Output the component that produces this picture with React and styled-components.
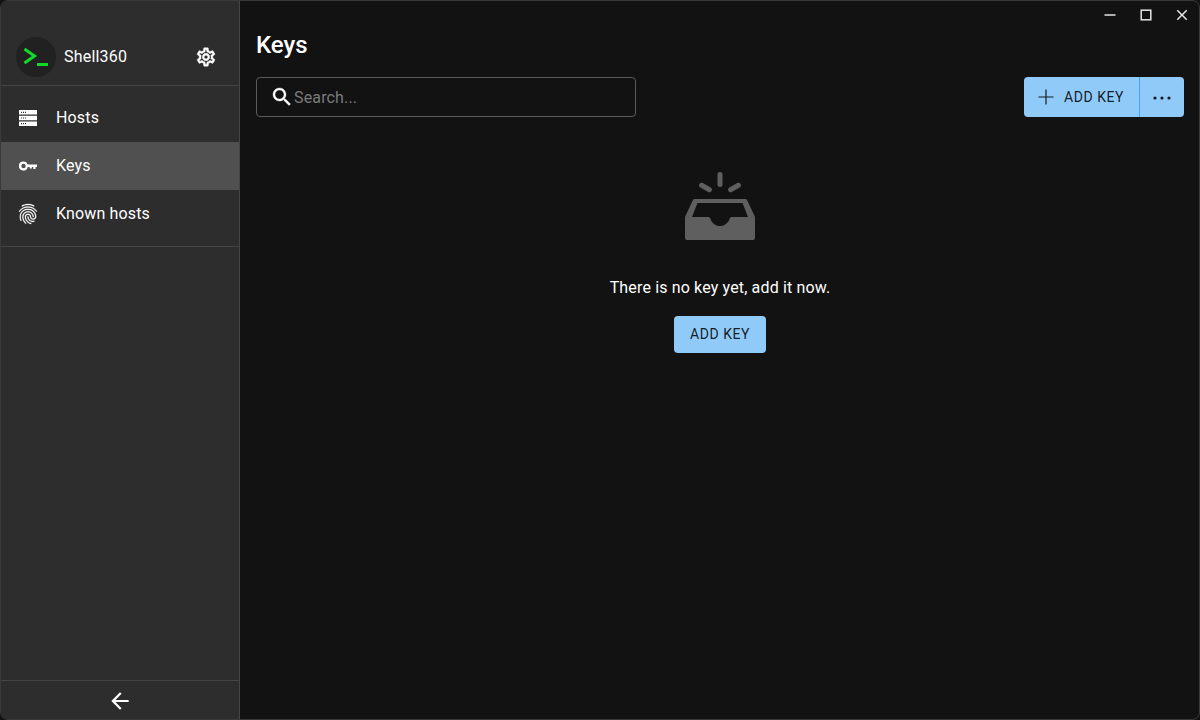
import React from "react";
import styled, { createGlobalStyle } from "styled-components";
import { MdArrowBack, MdClose } from "react-icons/md";

const Global = createGlobalStyle`
  html, body { margin: 0; padding: 0; background: #121212; }
  * { box-sizing: border-box; }
  body { font-family: Roboto, "Liberation Sans", sans-serif; color: #fff; overflow: hidden; }
`;

const Win = styled.div`
  width: 1200px; height: 720px; display: flex; overflow: hidden;
  background: #121212; border: 1px solid #3a3a3a; border-radius: 8px;
`;
const Sidebar = styled.aside`
  width: 239px; flex: none; display: flex; flex-direction: column;
  background: #2d2d2d; border-right: 1px solid #444;
`;
const Brand = styled.div`
  height: 85px; flex: none; display: flex; align-items: center; padding: 28px 22px 0 15px;
  border-bottom: 1px solid #444;
`;
const Avatar = styled.div`
  width: 40px; height: 40px; border-radius: 50%; background: #212121; flex: none;
  display: flex; align-items: center; justify-content: center;
`;
const BrandName = styled.span`
  font-size: 16px; margin-left: 8px; flex: 1; line-height: 24px; letter-spacing: .2px;
`;
const GearBtn = styled.span`display: flex; color: #fff;`;
const Nav = styled.nav`
  padding: 8px 0; border-bottom: 1px solid #444; flex: none;
`;
const NavItem = styled.div`
  height: 48px; display: flex; align-items: center; padding-left: 15px;
  font-size: 16px; font-weight: 400; letter-spacing: .15px;
  background: ${p => (p.$active ? "#505050" : "transparent")};
`;
const NavLabel = styled.span`margin-top: -2px;`;
const NavIcon = styled.span`
  width: 24px; height: 24px; margin-right: 16px; display: flex; align-items: center; justify-content: center; color: #fff;
`;
const Spacer = styled.div`flex: 1;`;
const Collapse = styled.div`
  height: 39px; flex: none; border-top: 1px solid #444; padding-top: 2px;
  display: flex; align-items: center; justify-content: center;
`;
const Main = styled.main`
  flex: 1; min-width: 0; display: flex; flex-direction: column; padding: 0 15px 0 16px;
`;
const TitleBar = styled.div`
  height: 29px; flex: none; display: flex; justify-content: flex-end; margin-right: -16px;
`;
const WinBtn = styled.span`
  width: 36px; height: 27px; display: flex; align-items: center; justify-content: center; color: #e6e6e6;
`;
const Title = styled.h1`
  margin: 0; font-size: 24px; font-weight: 500; line-height: 30px;
`;
const Toolbar = styled.div`
  margin-top: 17px; display: flex; justify-content: space-between; align-items: center;
`;
const Search = styled.div`
  width: 380px; height: 40px; display: flex; align-items: center; padding-left: 13px;
  border: 1px solid #5a5a5a; border-radius: 4px;
`;
const SearchInput = styled.input`
  flex: 1; min-width: 0; border: 0; outline: 0; background: transparent; color: #fff; padding: 0;
  font: 400 16px Roboto, sans-serif; letter-spacing: .15px;
  &::placeholder { color: #7b7b7b; opacity: 1; }
`;
const Group = styled.div`
  display: flex; height: 40px; border-radius: 4px; overflow: hidden; background: #90caf9; color: rgba(0,0,0,.87);
`;
const GroupMain = styled.div`
  width: 116px; display: flex; align-items: center; padding: 0 0 1px 14px; gap: 10px;
  border-right: 1px solid #42a5f5; font-size: 14px; font-weight: 400; letter-spacing: .55px;
`;
const GroupMore = styled.div`
  width: 44px; display: flex; align-items: center; justify-content: center; padding-top: 1px;
`;
const Empty = styled.div`
  display: flex; flex-direction: column; align-items: center; margin-top: 55px;
`;
const EmptyText = styled.p`
  margin: 36px 0 0; font-size: 16px; line-height: 24px; letter-spacing: .15px;
`;
const Cta = styled.button`
  margin-top: 16px; width: 92px; height: 37px; border: 0; border-radius: 4px; padding: 0 0 2px;
  background: #90caf9; color: rgba(0,0,0,.87); font: 400 14px Roboto, sans-serif; letter-spacing: .55px;
`;

const TerminalLogo = () => (
  <svg width="26" height="20" viewBox="0 0 26 20" fill="none" stroke="#0fdc28">
    <path d="M1.500 2 11.500 9 1.500 16" strokeWidth="3" />
    <path d="M14 17.500h11" strokeWidth="3" />
  </svg>
);
const ServerIcon = () => (
  <svg width="18" height="16" viewBox="0 0 18 16">
    <path fill="#fff" fillRule="evenodd" d="M0 0h18v4.500H0zM0 5.700h18v4.500H0zM0 11.400h18v4.600H0zM2 1.700v1.200h1V1.700zm2 0v1.200h1V1.700zm2 0v1.200h1V1.700zM2 7.400v1.200h1V7.400zm2 0v1.200h1V7.400zm2 0v1.200h1V7.400zM2 13.100v1.200h1v-1.200zm2 0v1.200h1v-1.200zm2 0v1.200h1v-1.200z" />
  </svg>
);
const KeyIcon = () => (
  <svg width="18" height="10" viewBox="0 0 18 10">
    <path fill="#fff" fillRule="evenodd" d="M4.500.5a4.500 4.500 0 0 1 4.200 3H18v2.400h-1.500V8h-2.200V5.900h-1.400V7.500h-2.200V5.900H8.700a4.500 4.500 0 1 1-4.200-5.400zm0 2.300a2.200 2.200 0 1 0 0 4.400 2.200 2.200 0 0 0 0-4.400z" />
  </svg>
);
const GearIcon = () => (
  <svg width="22" height="22" viewBox="0 0 24 24" fill="currentColor" stroke="currentColor" strokeWidth=".5">
    <path d="M19.430 12.980c.04-.32.07-.64.07-.98 0-.34-.03-.66-.07-.98l2.110-1.650c.19-.15.24-.42.12-.64l-2-3.460c-.09-.16-.26-.25-.44-.25-.06 0-.12.01-.17.03l-2.490 1c-.52-.4-1.080-.73-1.690-.98l-.38-2.650C14.460 2.180 14.250 2 14 2h-4c-.25 0-.46.18-.49.42l-.38 2.650c-.61.25-1.170.59-1.690.98l-2.490-1c-.06-.02-.12-.03-.18-.03-.17 0-.34.09-.43.25l-2 3.460c-.13.22-.07.49.12.64l2.110 1.650c-.04.32-.07.65-.07.98 0 .33.03.66.07.98l-2.110 1.650c-.19.15-.24.42-.12.64l2 3.460c.09.16.26.25.44.25.06 0 .12-.01.17-.03l2.490-1c.52.4 1.080.73 1.690.98l.38 2.650c.03.24.24.42.49.42h4c.25 0 .46-.18.49-.42l.38-2.650c.61-.25 1.170-.59 1.690-.98l2.490 1c.06.02.12.03.18.03.17 0 .34-.09.43-.25l2-3.460c.12-.22.07-.49-.12-.64l-2.110-1.650zm-1.980-1.710c.04.31.05.52.05.73 0 .21-.02.43-.05.73l-.14 1.130.89.7 1.080.84-.7 1.210-1.270-.51-1.040-.42-.9.68c-.43.32-.84.56-1.250.73l-1.060.43-.16 1.130-.2 1.350h-1.400l-.19-1.350-.16-1.130-1.060-.43c-.43-.18-.83-.41-1.230-.71l-.91-.7-1.060.43-1.270.51-.7-1.210 1.080-.84.89-.7-.14-1.130c-.03-.31-.05-.54-.05-.74s.02-.43.05-.73l.14-1.130-.89-.7-1.080-.84.7-1.210 1.270.51 1.040.42.9-.68c.43-.32.84-.56 1.250-.73l1.060-.43.16-1.130.2-1.350h1.390l.19 1.350.16 1.130 1.060.43c.43.18.83.41 1.230.71l.91.7 1.060-.43 1.270-.51.7 1.210-1.070.85-.89.7.14 1.130zM12 8c-2.210 0-4 1.790-4 4s1.790 4 4 4 4-1.790 4-4-1.790-4-4-4zm0 6c-1.100 0-2-.9-2-2s.9-2 2-2 2 .9 2 2-.9 2-2 2z" />
  </svg>
);
const FingerprintIcon = () => (
  <svg width="26" height="26" viewBox="0 0 24 24" fill="currentColor" stroke="currentColor" strokeWidth=".25">
    <path d="M17.810 4.470c-.08 0-.16-.02-.23-.06C15.660 3.420 14 3 12.010 3c-1.980 0-3.860.47-5.570 1.410-.24.13-.54.04-.68-.2-.13-.24-.04-.55.2-.68C7.820 2.520 9.860 2 12.010 2c2.130 0 3.990.47 6.030 1.520.25.13.34.43.21.67-.09.18-.26.28-.44.28zM3.500 9.720c-.1 0-.2-.03-.29-.09-.23-.16-.28-.47-.12-.7.99-1.400 2.250-2.500 3.750-3.270C9.980 4.040 14 4.030 17.150 5.650c1.500.77 2.760 1.860 3.750 3.250.16.22.11.54-.12.7-.23.16-.54.11-.7-.12-.9-1.260-2.040-2.250-3.390-2.940-2.870-1.470-6.540-1.470-9.400.01-1.360.7-2.500 1.700-3.400 2.960-.08.14-.23.21-.39.21zm6.250 12.070c-.13 0-.26-.05-.35-.15-.87-.87-1.340-1.430-2.010-2.640-.69-1.230-1.050-2.730-1.050-4.340 0-2.970 2.540-5.390 5.660-5.390s5.660 2.420 5.660 5.390c0 .28-.22.5-.5.500s-.5-.22-.5-.5c0-2.420-2.090-4.390-4.660-4.390-2.570 0-4.660 1.970-4.660 4.390 0 1.440.32 2.770.93 3.850.64 1.150 1.080 1.640 1.850 2.420.19.2.19.51 0 .71-.11.1-.24.15-.37.15zm7.170-1.850c-1.190 0-2.240-.3-3.100-.89-1.490-1.010-2.380-2.650-2.380-4.390 0-.28.22-.5.5-.5s.5.22.5.5c0 1.410.72 2.740 1.940 3.560.71.48 1.540.71 2.540.71.24 0 .64-.03 1.040-.1.27-.05.53.13.58.41.05.27-.13.53-.41.58-.57.11-1.070.12-1.210.12zM14.910 22c-.04 0-.09-.01-.13-.02-1.590-.44-2.630-1.030-3.720-2.100-1.400-1.390-2.170-3.240-2.170-5.220 0-1.620 1.380-2.940 3.080-2.940 1.700 0 3.080 1.320 3.080 2.940 0 1.070.93 1.940 2.080 1.940s2.080-.87 2.080-1.940c0-3.770-3.250-6.830-7.250-6.830-2.840 0-5.440 1.580-6.610 4.030-.39.81-.59 1.760-.59 2.800 0 .78.07 2.010.67 3.610.1.26-.03.55-.29.64-.26.1-.55-.04-.64-.29-.49-1.310-.73-2.610-.73-3.960 0-1.200.23-2.290.68-3.240 1.330-2.790 4.280-4.600 7.510-4.600 4.550 0 8.250 3.510 8.250 7.830 0 1.620-1.380 2.940-3.080 2.940s-3.080-1.320-3.080-2.940c0-1.070-.93-1.940-2.080-1.940s-2.080.87-2.080 1.940c0 1.710.66 3.310 1.870 4.510.95.94 1.860 1.460 3.270 1.850.27.07.42.35.35.61-.05.23-.26.38-.47.38z" />
  </svg>
);
const SearchIcon = () => (
  <svg width="24" height="24" viewBox="0 0 24 24" fill="currentColor" stroke="currentColor" strokeWidth=".35">
    <path d="M15.500 14h-.79l-.28-.27C15.410 12.590 16 11.110 16 9.500 16 5.910 13.090 3 9.500 3S3 5.910 3 9.500 5.910 16 9.500 16c1.610 0 3.090-.59 4.230-1.570l.27.28v.79l5 4.990L20.490 19l-4.990-5zm-6 0C7.010 14 5 11.990 5 9.500S7.010 5 9.500 5 14 7.010 14 9.500 11.990 14 9.500 14z" />
  </svg>
);
const InboxIcon = () => (
  <svg width="70" height="68" viewBox="0 0 70 68" fill="#5f5f5f">
    <rect x="32.500" y="0" width="5" height="15" rx="2.500" />
    <rect x="13.500" y="13" width="14" height="5" rx="2.500" transform="rotate(30 20.500 15.500)" />
    <rect x="42.500" y="13" width="14" height="5" rx="2.500" transform="rotate(-30 49.500 15.500)" />
    <path fillRule="evenodd" d="M10 27H60c1 0 1.800.5 2.300 1.500L70 45V66a2 2 0 0 1-2 2H2a2 2 0 0 1-2-2V45L7.700 28.500C8.200 27.500 9 27 10 27zM12.500 31 7 45H23c1.500 0 2 .8 2.600 2.200C27 51 30.500 54 35 54s8-3 9.400-6.800C45 45.800 45.500 45 47 45H63L57.500 31z" />
  </svg>
);
const PlusIcon = () => (
  <svg width="16" height="16" viewBox="0 0 16 16" fill="none" stroke="currentColor" strokeWidth="1.200">
    <path d="M8 .5v15M.5 8h15" />
  </svg>
);
const DotsIcon = () => (
  <svg width="20" height="6" viewBox="0 0 20 6" fill="currentColor">
    <circle cx="3" cy="3" r="1.600" />
    <circle cx="10" cy="3" r="1.600" />
    <circle cx="17" cy="3" r="1.600" />
  </svg>
);

export default function App() {
  return (
    <>
      <Global />
      <Win>
        <Sidebar>
          <Brand>
            <Avatar><TerminalLogo /></Avatar>
            <BrandName>Shell360</BrandName>
            <GearBtn><GearIcon /></GearBtn>
          </Brand>
          <Nav>
            <NavItem><NavIcon><ServerIcon /></NavIcon><NavLabel>Hosts</NavLabel></NavItem>
            <NavItem $active><NavIcon><KeyIcon /></NavIcon><NavLabel>Keys</NavLabel></NavItem>
            <NavItem><NavIcon><FingerprintIcon /></NavIcon><NavLabel>Known hosts</NavLabel></NavItem>
          </Nav>
          <Spacer />
          <Collapse><MdArrowBack size={26} /></Collapse>
        </Sidebar>
        <Main>
          <TitleBar>
            <WinBtn><svg width="12" height="12" viewBox="0 0 12 12"><path d="M.5 6h11" stroke="currentColor" strokeWidth="1.300" /></svg></WinBtn>
            <WinBtn><svg width="12" height="12" viewBox="0 0 12 12" fill="none"><rect x="1.200" y="1.200" width="9.600" height="9.600" stroke="currentColor" strokeWidth="1.500" /></svg></WinBtn>
            <WinBtn><MdClose size={18} /></WinBtn>
          </TitleBar>
          <Title>Keys</Title>
          <Toolbar>
            <Search>
              <SearchIcon />
              <SearchInput placeholder="Search..." />
            </Search>
            <Group>
              <GroupMain><PlusIcon />ADD KEY</GroupMain>
              <GroupMore><DotsIcon /></GroupMore>
            </Group>
          </Toolbar>
          <Empty>
            <InboxIcon />
            <EmptyText>There is no key yet, add it now.</EmptyText>
            <Cta>ADD KEY</Cta>
          </Empty>
        </Main>
      </Win>
    </>
  );
}
